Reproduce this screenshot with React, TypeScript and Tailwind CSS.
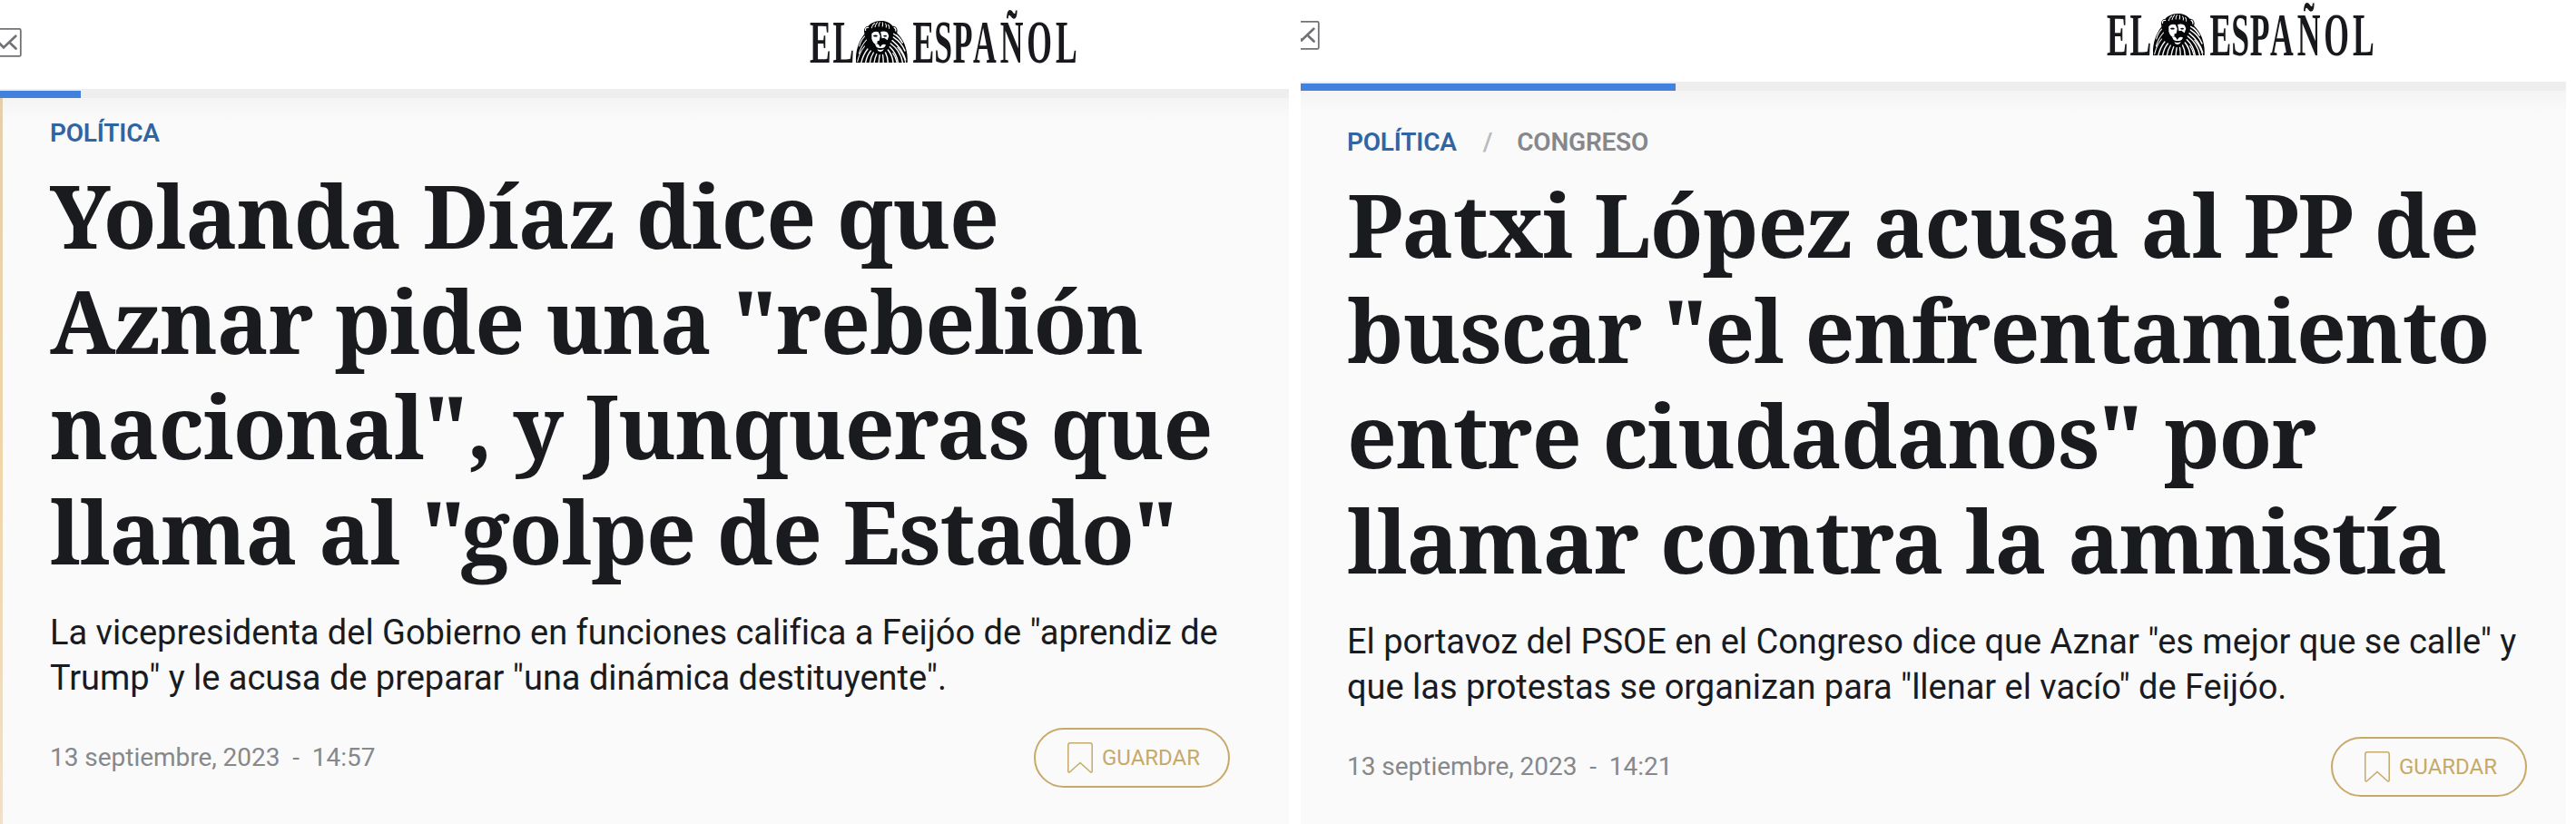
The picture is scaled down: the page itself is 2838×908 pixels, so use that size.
type Article = {
  section: string;
  subsection?: string;
  title: string[];
  summary: string[];
  date: string;
  time: string;
};

const YOLANDA: Article = {
  section: "POLÍTICA",
  title: [
    "Yolanda Díaz dice que",
    'Aznar pide una "rebelión',
    'nacional", y Junqueras que',
    'llama al "golpe de Estado"',
  ],
  summary: [
    'La vicepresidenta del Gobierno en funciones califica a Feijóo de "aprendiz de',
    'Trump" y le acusa de preparar "una dinámica destituyente".',
  ],
  date: "13 septiembre, 2023",
  time: "14:57",
};

const PATXI: Article = {
  section: "POLÍTICA",
  subsection: "CONGRESO",
  title: [
    "Patxi López acusa al PP de",
    'buscar "el enfrentamiento',
    'entre ciudadanos" por',
    "llamar contra la amnistía",
  ],
  summary: [
    'El portavoz del PSOE en el Congreso dice que Aznar "es mejor que se calle" y',
    'que las protestas se organizan para "llenar el vacío" de Feijóo.',
  ],
  date: "13 septiembre, 2023",
  time: "14:21",
};

function Lion() {
  return (
    <svg x="53" y="22.7" width="57" height="46.3" viewBox="222 68 168 139" preserveAspectRatio="none">
      {/* Melena */}
      <path
        d="M222 207C220 176 228 140 250 112C246 98 250 87 262 86C268 78 284 68 305 69C322 69 334 77 341 86C354 86 359 97 355 109C378 132 392 166 389 207Z"
        fill="#050607"
      />
      {/* Mechones */}
      <g fill="none" stroke="#fff" strokeLinecap="round" strokeWidth="4">
        <path d="M273 92q2-11 10-15M284 89q2-10 8-15M296 87q0-9 4-13M308 87q2-8 0-13M320 90q2-7-2-12M330 94q2-6-3-12" strokeWidth="3" />
        <path d="M253 100q-1-10 9-9M346 91q7 3 5 11" strokeWidth="3.6" />
        <path d="M250 120q-13 14-17 33M256 132q-17 19-24 45M250 153q-16 20-23 50" strokeWidth="3.2" />
        <path d="M260 162q-15 19-21 46M270 168q-13 16-17 41M279 174q-9 14-12 35M289 179q-6 13-8 30M299 182q-2 12-3 27M309 181q2 13 2 27" />
        <path d="M318 174q8 15 8 35M326 165q15 18 17 44M332 155q23 22 27 54M335 144q32 24 39 65M340 134q33 27 43 64M344 123q27 18 37 45M345 112q17 10 28 29" strokeWidth="4.4" />
        <path d="M354 116q11 9 17 23M357 157q20 22 26 49M342 176q10 13 13 33" strokeWidth="3.2" />
      </g>
      {/* Cara */}
      <path d="M273 111q10-10 22-5l6 13-4 18-11 10q-11-6-13-20z" fill="#fff" />
      <path d="M302 105q12-4 23 3l4 11-5 14-10-8-8 2z" fill="#fff" />
      <path d="M278 118q8-5 15 1-7 5-14 1zM310 119q7-5 13 0-6 5-11 1z" fill="#050607" />
      <path d="M284 147q7-5 13 2l4 7 4-7q8-5 14-1-1 9-12 11h-11q-9-2-12-12zM291 163q11 5 22-1-4 10-12 9-8 0-10-8z" fill="#fff" />
      <path d="M290 137q11-5 21 0-2 9-9 11-9-3-12-11z" fill="#050607" />
    </svg>
  );
}

function Logo() {
  return (
    <svg width="300" height="76" viewBox="0 0 300 76" className="overflow-visible" aria-label="El Español">
      <g
        transform="scale(.52 1)"
        fill="#17191c"
        fontFamily="'Liberation Serif', serif"
        fontWeight="700"
        fontSize="68.5"
      >
        <text x="4 53" y="69">EL</text>
        <text x="222 268 307 350 407 464 525" y="69">ESPAÑOL</text>
      </g>
      <Lion />
    </svg>
  );
}

function MailIcon() {
  return (
    <svg width="24" height="34" viewBox="0 0 24 34" fill="none" stroke="#6f7175">
      <rect x="-14" y="1.9" width="36.8" height="30" rx="1.5" strokeWidth="1.8" />
      <path d="M-9 9 4 22.4 17.3 9.7M12 18.3l5.5 5.2" strokeWidth="2.7" strokeLinecap="round" />
    </svg>
  );
}

function SaveButton() {
  return (
    <button
      type="button"
      className="flex h-[66px] w-[216px] items-center rounded-full border-2 border-[#c7a968] pl-[35px] text-[24px] text-[#c7a968]"
    >
      <svg width="28" height="34" viewBox="0 0 28 34" fill="none" stroke="currentColor" strokeWidth="1.5">
        <path d="M3 .8h22q2.2 0 2.2 2.2v28.5q0 2.4-1.8 1.2L14 22.4 2.6 32.7Q.8 33.9.8 31.5V3Q.8.8 3 .8z" />
      </svg>
      <span className="ml-[10px] leading-8">GUARDAR</span>
    </button>
  );
}

function ArticleBody({ article }: { article: Article }) {
  return (
    <article>
      <div className="flex text-[28px] font-semibold leading-8 tracking-[-0.2px]">
        <span className="text-[#3164a3]">{article.section}</span>
        {article.subsection && (
          <>
            <span className="ml-[29px] text-[#b9bbbe]">/</span>
            <span className="ml-[27px] text-[#85878a]">{article.subsection}</span>
          </>
        )}
      </div>
      <h1 className="mt-[16px] whitespace-nowrap font-['Noto_Serif',serif] text-[96px] font-bold leading-[116px] tracking-[-1.08px]">
        {article.title.map((line) => (
          <span key={line} className="block">{line}</span>
        ))}
      </h1>
      <p className="mt-[29px] whitespace-nowrap text-[38px] leading-[50px] tracking-[-0.02px]">
        {article.summary.map((line) => (
          <span key={line} className="block">{line}</span>
        ))}
      </p>
      <div className="mt-[30px] flex items-center justify-between">
        <p className="whitespace-pre text-[28px] leading-8 tracking-[-0.03px] text-[#86888b]">
          {article.date}{"  -  "}{article.time}
        </p>
        <SaveButton />
      </div>
    </article>
  );
}

export default function App() {
  return (
    <div className="flex h-[908px] w-[2838px] overflow-hidden bg-white font-['Roboto',sans-serif] text-[#191b1e]">
      {/* Captura izquierda */}
      <section className="flex w-[1420px] flex-col bg-[#fafafa]">
        <header className="flex h-[98px] items-start bg-white">
          <div className="pt-[30px]"><MailIcon /></div>
          <div className="ml-[866px]"><Logo /></div>
        </header>
        <div className="h-[10px] bg-[#eeeeee] pt-[2px]">
          <div className="h-2 w-[89px] bg-[#4382dc]" />
        </div>
        <div className="flex flex-1">
          <div className="w-[3px] bg-linear-to-b from-[#e5cfaa] via-[#efd5a8] to-[#f0dfca]" />
          <div className="flex-1 bg-linear-to-b from-[#f4f4f4] to-[#fafafa] to-[24px] pl-[52px] pr-[65px] pt-[23px]">
            <ArticleBody article={YOLANDA} />
          </div>
        </div>
      </section>

      {/* Captura derecha */}
      <section className="ml-[13px] flex w-[1394px] flex-col bg-[#fafafa]">
        <header className="flex h-[90px] items-start bg-white">
          <div className="w-[20.5px] overflow-hidden pt-[22px]">
            <div className="ml-[-3.5px]"><MailIcon /></div>
          </div>
          <div className="ml-[865px] mt-[-8px]"><Logo /></div>
        </header>
        <div className="h-[10px] bg-[#eeeeee] pt-[2px]">
          <div className="h-2 w-[413px] bg-[#4382dc]" />
        </div>
        <div className="flex-1 bg-linear-to-b from-[#f4f4f4] to-[#fafafa] to-[24px] pl-[51px] pr-[43px] pt-[41px]">
          <ArticleBody article={PATXI} />
        </div>
      </section>
    </div>
  );
}
